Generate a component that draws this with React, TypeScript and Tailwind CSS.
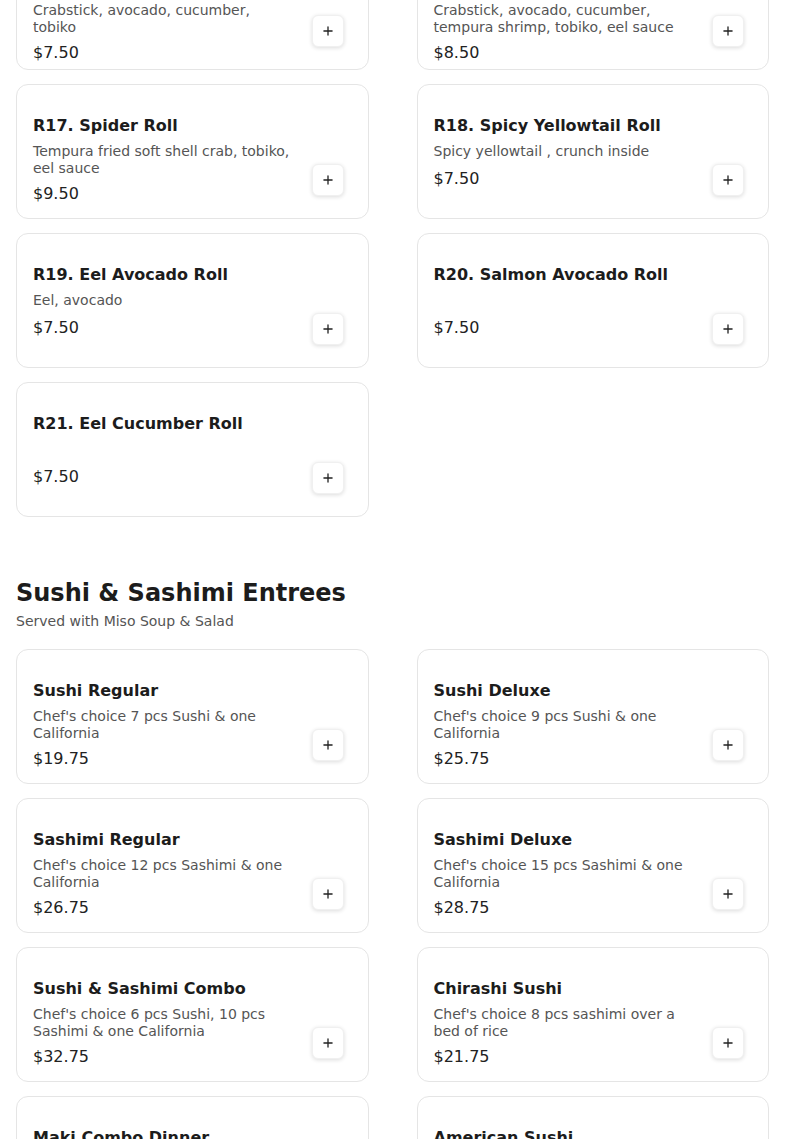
import { Plus } from "lucide-react";

type Item = { name: string; desc?: string; price: string };

const ROLLS_TOP: Item[] = [
  { name: "R15. California Crunch Roll", desc: "Crabstick, avocado, cucumber, tobiko", price: "$7.50" },
  { name: "R16. Dragon Roll", desc: "Crabstick, avocado, cucumber, tempura shrimp, tobiko, eel sauce", price: "$8.50" },
];

const ROLLS: Item[] = [
  { name: "R17. Spider Roll", desc: "Tempura fried soft shell crab, tobiko, eel sauce", price: "$9.50" },
  { name: "R18. Spicy Yellowtail Roll", desc: "Spicy yellowtail , crunch inside", price: "$7.50" },
  { name: "R19. Eel Avocado Roll", desc: "Eel, avocado", price: "$7.50" },
  { name: "R20. Salmon Avocado Roll", price: "$7.50" },
  { name: "R21. Eel Cucumber Roll", price: "$7.50" },
];

const ENTREES: Item[] = [
  { name: "Sushi Regular", desc: "Chef's choice 7 pcs Sushi & one California", price: "$19.75" },
  { name: "Sushi Deluxe", desc: "Chef's choice 9 pcs Sushi & one California", price: "$25.75" },
  { name: "Sashimi Regular", desc: "Chef's choice 12 pcs Sashimi & one California", price: "$26.75" },
  { name: "Sashimi Deluxe", desc: "Chef's choice 15 pcs Sashimi & one California", price: "$28.75" },
  { name: "Sushi & Sashimi Combo", desc: "Chef's choice 6 pcs Sushi, 10 pcs Sashimi & one California", price: "$32.75" },
  { name: "Chirashi Sushi", desc: "Chef's choice 8 pcs sashimi over a bed of rice", price: "$21.75" },
  { name: "Maki Combo Dinner", desc: "California roll, tuna roll, salmon roll", price: "$18.75" },
  { name: "American Sushi", desc: "Chef's choice cooked sushi & one California", price: "$20.75" },
];

function MenuCard({ item, top = false }: { item: Item; top?: boolean }) {
  return (
    <div className="flex h-[135px] gap-4 rounded-xl border border-[#e5e5e5] bg-white pl-4 pr-6">
      <div className={`min-w-0 flex-1 ${top ? "pt-[37px]" : "pt-[29px]"}`}>
        <h3 className="text-base font-bold leading-6 text-[#1c1c1c]">{item.name}</h3>
        <p className="mt-[5px] min-h-[19px] text-sm leading-[17px] text-[#555555]">{item.desc}</p>
        <p className="mt-[5px] text-base leading-6 text-[#222222]">{item.price}</p>
      </div>
      <div className="pt-[79px]">
        <button className="flex h-8 w-8 items-center justify-center rounded-md border border-[#f0f0f0] bg-white text-[#222222] shadow-[0_1px_4px_rgba(0,0,0,0.14)]">
          <Plus className="h-3.5 w-3.5" strokeWidth={2.25} />
        </button>
      </div>
    </div>
  );
}

export default function App() {
  return (
    <div className="h-[1139px] overflow-hidden bg-white font-['DejaVu_Sans',sans-serif]">
      <div className="-mt-[65.5px] px-4">
        <div className="grid grid-cols-2 gap-x-12 gap-y-[14px]">
          {ROLLS_TOP.map((it) => (
            <MenuCard key={it.name} item={it} top />
          ))}
          {ROLLS.map((it) => (
            <MenuCard key={it.name} item={it} />
          ))}
        </div>

        <section className="mt-[60px]">
          <h2 className="text-2xl font-bold leading-8 text-[#1c1c1c]">Sushi &amp; Sashimi Entrees</h2>
          <p className="mt-[2px] text-sm leading-5 text-[#555555]">Served with Miso Soup &amp; Salad</p>
          <div className="mt-[18px] grid grid-cols-2 gap-x-12 gap-y-[14px]">
            {ENTREES.map((it) => (
              <MenuCard key={it.name} item={it} />
            ))}
          </div>
        </section>
      </div>
    </div>
  );
}
